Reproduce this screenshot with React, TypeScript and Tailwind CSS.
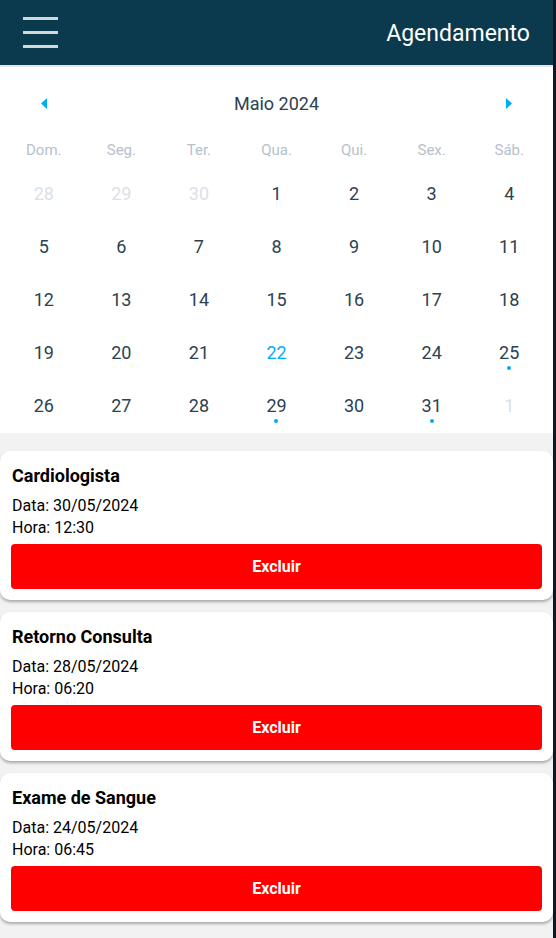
import React from "react";

type Day = { n: number; muted?: boolean; today?: boolean; dot?: boolean };

const weekDays = ["Dom.", "Seg.", "Ter.", "Qua.", "Qui.", "Sex.", "Sáb."];

const weeks: Day[][] = [
  [{ n: 28, muted: true }, { n: 29, muted: true }, { n: 30, muted: true }, { n: 1 }, { n: 2 }, { n: 3 }, { n: 4 }],
  [{ n: 5 }, { n: 6 }, { n: 7 }, { n: 8 }, { n: 9 }, { n: 10 }, { n: 11 }],
  [{ n: 12 }, { n: 13 }, { n: 14 }, { n: 15 }, { n: 16 }, { n: 17 }, { n: 18 }],
  [{ n: 19 }, { n: 20 }, { n: 21 }, { n: 22, today: true }, { n: 23 }, { n: 24 }, { n: 25, dot: true }],
  [{ n: 26 }, { n: 27 }, { n: 28 }, { n: 29, dot: true }, { n: 30 }, { n: 31, dot: true }, { n: 1, muted: true }],
];

const appointments = [
  { title: "Cardiologista", date: "30/05/2024", time: "12:30" },
  { title: "Retorno Consulta", date: "28/05/2024", time: "06:20" },
  { title: "Exame de Sangue", date: "24/05/2024", time: "06:45" },
];

export default function App() {
  return (
    <div className="flex min-h-[938px] w-[556px] font-['Roboto',sans-serif]">
      <div className="flex w-[553px] flex-col bg-[#f2f2f2]">
        {/* header */}
        <div className="flex h-[65px] items-center justify-between bg-[#0b394e] pl-[23px] pr-[23px]">
          <div className="flex w-[35px] flex-col gap-[11px]">
            <div className="h-[3px] bg-[#d4d6d8]" />
            <div className="h-[3px] bg-[#d4d6d8]" />
            <div className="h-[3px] bg-[#d4d6d8]" />
          </div>
          <span className="pt-[2px] text-[23px] leading-none text-white">Agendamento</span>
        </div>
        <div className="h-[2px] bg-[#e6e6e6]" />

        {/* calendar */}
        <div className="bg-white px-[5px]">
          <div className="flex h-[72px] items-center justify-between px-[36px]">
            <svg width="6" height="11" viewBox="0 0 6 11">
              <path d="M6 0 L0 5.5 L6 11 Z" fill="#00adf5" />
            </svg>
            <span className="text-[18px] text-[#2d4150]">Maio 2024</span>
            <svg width="6" height="11" viewBox="0 0 6 11">
              <path d="M0 0 L6 5.5 L0 11 Z" fill="#00adf5" />
            </svg>
          </div>
          <div className="grid h-[22px] grid-cols-7 items-center">
            {weekDays.map((d) => (
              <span key={d} className="text-center text-[15px] text-[#b6c1cd]">
                {d}
              </span>
            ))}
          </div>
          <div className="pt-[6px] pb-px">
            {weeks.map((week, i) => (
              <div key={i} className="grid h-[53px] grid-cols-7">
                {week.map((day, j) => (
                  <div key={j} className="flex flex-col items-center pt-[16px]">
                    <span
                      className={`text-[18px] leading-[22px] ${
                        day.muted ? "text-[#d9e1e8]" : day.today ? "text-[#00adf5]" : "text-[#2d4150]"
                      }`}
                    >
                      {day.n}
                    </span>
                    {day.dot && <span className="mt-[2px] h-[4px] w-[4px] rounded-full bg-[#00adf5]" />}
                  </div>
                ))}
              </div>
            ))}
          </div>
        </div>

        {/* appointments */}
        <div className="flex flex-col gap-[12px] pt-[18px]">
          {appointments.map((a) => (
            <div
              key={a.title}
              className="rounded-[10px] bg-white px-[11px] pb-[11px] pt-[14px] shadow-[0_2px_3px_rgba(0,0,0,0.3)]"
            >
              <div className="pl-px text-[18px] font-bold leading-[22px] text-black">{a.title}</div>
              <div className="mt-[8px] pl-px text-[16px] leading-[22px] text-black">Data: {a.date}</div>
              <div className="pl-px text-[16px] leading-[22px] text-black">Hora: {a.time}</div>
              <button className="mt-[5px] flex h-[45px] w-full items-center justify-center rounded-[4px] bg-[#ff0000] text-[16px] font-bold text-white">
                Excluir
              </button>
            </div>
          ))}
        </div>
      </div>
      <div className="w-[3px] bg-[#0f1628]" />
    </div>
  );
}
